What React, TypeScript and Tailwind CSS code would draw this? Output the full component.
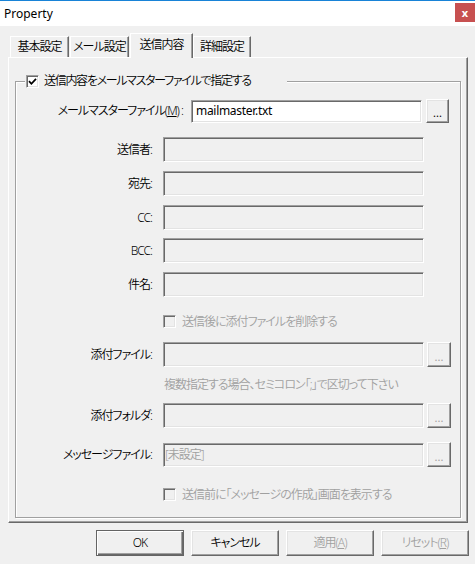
import React from 'react';

const sunken =
  'border border-t-[#a0a0a0] border-l-[#a0a0a0] border-r-white border-b-white shadow-[inset_1px_1px_0_#696969,inset_-1px_-1px_0_#e3e3e3]';
const raised =
  'border border-t-white border-l-white border-r-[#696969] border-b-[#696969] shadow-[inset_-1px_-1px_0_#a0a0a0,inset_1px_1px_0_#e3e3e3]';

function Check({ checked = false, disabled = false }: { checked?: boolean; disabled?: boolean }) {
  return (
    <span
      className={`flex h-[13px] w-[13px] shrink-0 items-center justify-center ${sunken} ${
        disabled ? 'bg-[#f0f0f0]' : 'bg-white'
      }`}
    >
      {checked && (
        <svg width="9" height="9" viewBox="0 0 9 9">
          <path d="M1 4.2 L3.4 6.8 L8 1.8" fill="none" stroke="#000" strokeWidth="1.7" />
        </svg>
      )}
    </span>
  );
}

function Browse({ disabled = false }: { disabled?: boolean }) {
  return (
    <div
      className={`ml-[3px] flex h-[25px] w-[24px] items-center justify-center bg-[#f0f0f0] pt-[3px] ${raised}`}
    >
      <span className={`text-[11px] font-normal leading-none tracking-normal ${disabled ? 'text-[#a0a0a0]' : 'text-black'}`}>...</span>
    </div>
  );
}

function Field({
  label,
  mt,
  h = 'h-[25px]',
  value,
  browse = false,
}: {
  label: string;
  mt: string;
  h?: string;
  value?: string;
  browse?: boolean;
}) {
  return (
    <div className={`flex items-center ${mt}`}>
      <span className="w-[136px] whitespace-nowrap text-right text-[12px] leading-none text-black">{label}</span>
      <div className={`ml-[11px] flex w-[261px] items-center bg-[#f0f0f0] pl-[1px] ${h} ${sunken}`}>
        {value && <span className="text-[12px] leading-none text-[#a0a0a0]">{value}</span>}
      </div>
      {browse && <Browse disabled />}
    </div>
  );
}

function Tab({ label, className }: { label: string; className: string }) {
  return (
    <div
      className={`flex items-center justify-center whitespace-nowrap bg-[#f0f0f0] text-[12px] leading-none text-black border-t border-l border-r border-t-white border-l-white border-r-[#696969] shadow-[inset_-1px_0_0_#a0a0a0] ${className}`}
    >
      {label}
    </div>
  );
}

function DlgButton({ children, variant = 'normal' }: { children: React.ReactNode; variant?: 'default' | 'normal' | 'disabled' }) {
  const frame =
    variant === 'default'
      ? 'border border-[#646464] shadow-[inset_1px_1px_0_#fff,inset_-1px_-1px_0_#696969,inset_-2px_-2px_0_#a0a0a0]'
      : raised;
  return (
    <div
      className={`flex h-[26px] w-[88px] items-center justify-center whitespace-nowrap bg-[#f0f0f0] text-[12px] leading-none ${frame} ${
        variant === 'disabled' ? 'text-[#a0a0a0]' : 'text-black'
      }`}
    >
      {children}
    </div>
  );
}

export default function App() {
  return (
    <div className="flex h-[564px] w-[475px] flex-col overflow-hidden bg-[#f0f0f0] font-[350] tracking-[-1px] font-['Noto_Sans','Noto_Sans_CJK_JP',sans-serif] [font-feature-settings:'palt']">
      {/* title bar */}
      <div className="flex h-[26px] items-start justify-between border-t border-[#1883d7] bg-white">
        <span className="self-center pl-[4px] text-[12px] font-normal leading-none tracking-normal text-black">Property</span>
        <div className="mt-[2px] flex h-[19px] w-[20px] items-center justify-center bg-[#c75050]">
          <span className="text-[11px] font-bold leading-none tracking-normal text-white">x</span>
        </div>
      </div>

      {/* tabs */}
      <div className="mt-[7px] flex h-[25px] items-end pl-[10px]">
        <Tab label="基本設定" className="mb-px h-[21px] w-[59px]" />
        <Tab label="メール設定" className="mb-px ml-px h-[21px] w-[59px]" />
        <Tab label="送信内容" className="relative z-10 ml-px h-[25px] w-[63px] pb-[2px]" />
        <Tab label="詳細設定" className="mb-px h-[21px] w-[58px]" />
      </div>

      {/* tab panel */}
      <div className="-mt-px ml-[8px] h-[466px] w-[460px] border border-t-white border-l-white border-r-[#696969] border-b-[#696969] shadow-[inset_-1px_-1px_0_#a0a0a0]">
        <div className="relative ml-[6px] mt-[23px] h-[437px] w-[446px] border border-[#a0a0a0] shadow-[1px_1px_0_#fff,inset_1px_1px_0_#fff]">
          <div className="absolute left-[9px] top-[-8px] flex h-[14px] w-[262px] items-center bg-[#f0f0f0] pl-[1px]">
            <Check checked />
            <span className="ml-[5px] whitespace-nowrap text-[12px] leading-none tracking-[-1.3px] text-black">送信内容をメールマスターファイルで指定する</span>
          </div>

          <div className="flex flex-col">
            <div className="mt-[17px] flex items-center">
              <span className="w-[167px] whitespace-nowrap text-right text-[12px] leading-none text-black">
                メールマスターファイル(<span className="underline">M</span>) :
              </span>
              <div className={`ml-[8px] flex h-[23px] w-[231px] items-center bg-white pl-[4px] ${sunken}`}>
                <span className="text-[12px] font-normal leading-none tracking-[-0.3px] text-black">mailmaster.txt</span>
              </div>
              <div className="ml-[4px]">
                <div className={`flex h-[24px] w-[23px] items-center justify-center bg-[#f0f0f0] pt-[3px] ${raised}`}>
                  <span className="text-[11px] font-normal leading-none tracking-normal text-black">...</span>
                </div>
              </div>
            </div>

            <Field label="送信者:" mt="mt-[14px]" />
            <Field label="宛先:" mt="mt-[9px]" />
            <Field label="CC:" mt="mt-[9px]" />
            <Field label="BCC:" mt="mt-[8px]" />
            <Field label="件名:" mt="mt-[9px]" />

            <div className="ml-[147px] mt-[18px] flex h-[13px] items-center">
              <Check disabled />
              <span className="ml-[6px] whitespace-nowrap text-[12px] leading-none text-[#a0a0a0]">送信後に添付ファイルを削除する</span>
            </div>

            <Field label="添付ファイル:" mt="mt-[14px]" browse />

            <div className="ml-[148px] mt-[10px] flex h-[16px] items-center">
              <span className="whitespace-nowrap text-[12px] leading-none text-[#a0a0a0]">複数指定する場合、セミコロン「;」で区切って下さい</span>
            </div>

            <Field label="添付フォルダ:" mt="mt-[10px]" browse />
            <Field label="メッセージファイル:" mt="mt-[14px]" h="h-[24px]" value="[未設定]" browse />

            <div className="ml-[147px] mt-[21px] flex h-[13px] items-center">
              <Check disabled />
              <span className="ml-[6px] whitespace-nowrap text-[12px] leading-none text-[#a0a0a0]">送信前に「メッセージの作成」画面を表示する</span>
            </div>
          </div>
        </div>
      </div>

      {/* dialog buttons */}
      <div className="mt-[7px] flex justify-end gap-[7px] pr-[6px]">
        <DlgButton variant="default">OK</DlgButton>
        <DlgButton>キャンセル</DlgButton>
        <DlgButton variant="disabled">
          適用(<span className="underline">A</span>)
        </DlgButton>
        <DlgButton variant="disabled">
          リセット(<span className="underline">R</span>)
        </DlgButton>
      </div>
    </div>
  );
}
